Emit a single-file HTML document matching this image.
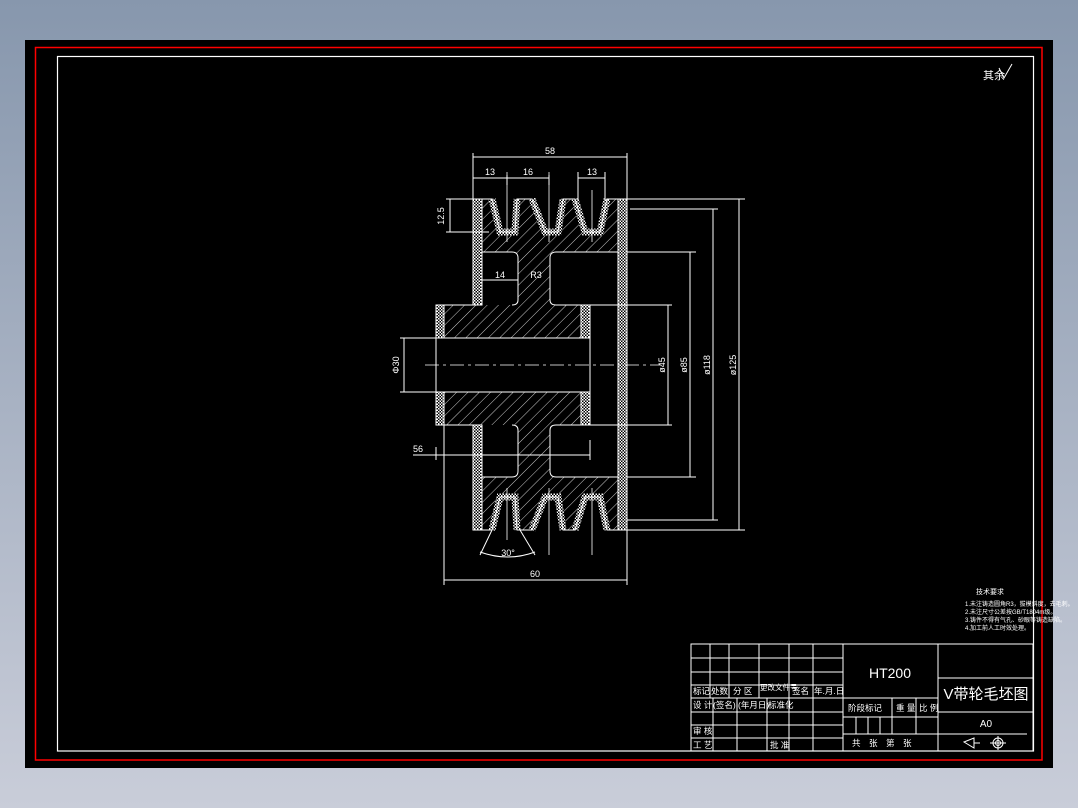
<!DOCTYPE html>
<html><head><meta charset="utf-8"><style>
html,body{margin:0;padding:0;width:1078px;height:808px;overflow:hidden;background:linear-gradient(#8797ad,#c9cdd9);}
svg{position:absolute;left:0;top:0}
text{font-family:"Liberation Sans","Noto Sans CJK SC",sans-serif;fill:#fff}
</style></head><body>
<svg width="1078" height="808" viewBox="0 0 1078 808">
<defs>
<pattern id="h" width="8" height="8" patternUnits="userSpaceOnUse" patternTransform="rotate(45)">
<line x1="0" y1="0" x2="0" y2="8" stroke="#fff" stroke-width="0.8"/></pattern>
<pattern id="c" width="3" height="3" patternUnits="userSpaceOnUse">
<rect width="3" height="3" fill="#000"/><rect width="1.5" height="1.5" fill="#fff"/><rect x="1.5" y="1.5" width="1.5" height="1.5" fill="#fff"/></pattern>
</defs>
<rect x="25" y="40" width="1028" height="728" fill="#000"/>
<rect x="35.5" y="47.5" width="1006.5" height="712.5" fill="none" stroke="#f00" stroke-width="1.5"/>
<rect x="57.5" y="56.5" width="976" height="694.5" fill="none" stroke="#fff" stroke-width="1.2"/>
<text x="983" y="79" font-size="11">其余</text>
<path d="M999 68 l5 10 l8 -14" fill="none" stroke="#fff"/>
<g stroke="#fff" stroke-width="1" fill="none">
<path d="M473 199 L492 199 L500 232 L515 232 L517 199 L532 199 L545 232 L558 232 L563 199 L575 199 L585 232 L600 232 L607 199 L627 199 L627 252 L556 252 Q550 252 550 258 L550 300 Q550 305 556 305 L590 305 L590 338 L436 338 L436 305 L512 305 Q518 305 518 300 L518 258 Q518 252 512 252 L473 252 Z" fill="url(#h)" stroke="none"/>
<path d="M436 392 L590 392 L590 425 L556 425 Q550 425 550 430 L550 471 Q550 477 556 477 L627 477 L627 530 L607 530 L600 497 L585 497 L575 530 L563 530 L558 497 L545 497 L532 530 L517 530 L515 497 L500 497 L492 530 L473 530 L473 477 L512 477 Q518 477 518 471 L518 430 Q518 425 512 425 L436 425 Z" fill="url(#h)" stroke="none"/>
<rect x="473" y="199" width="9" height="106" fill="url(#c)" stroke="#fff"/>
<rect x="473" y="425" width="9" height="105" fill="url(#c)" stroke="#fff"/>
<rect x="618" y="199" width="9" height="331" fill="url(#c)" stroke="#fff"/>
<rect x="436" y="305" width="8" height="33" fill="url(#c)" stroke="#fff"/>
<rect x="436" y="392" width="8" height="33" fill="url(#c)" stroke="#fff"/>
<rect x="581" y="305" width="9" height="33" fill="url(#c)" stroke="#fff"/>
<rect x="581" y="392" width="9" height="33" fill="url(#c)" stroke="#fff"/>
<path d="M492 199 L500 232 L515 232 L517 199 M532 199 L545 232 L558 232 L563 199 M575 199 L585 232 L600 232 L607 199" stroke="url(#c)" stroke-width="7"/>
<path d="M492 530 L500 497 L515 497 L517 530 M532 530 L545 497 L558 497 L563 530 M575 530 L585 497 L600 497 L607 530" stroke="url(#c)" stroke-width="7"/>
<path d="M473 199 L492 199 L500 232 L515 232 L517 199 L532 199 L545 232 L558 232 L563 199 L575 199 L585 232 L600 232 L607 199 L627 199 L627 530 L607 530 L600 497 L585 497 L575 530 L563 530 L558 497 L545 497 L532 530 L517 530 L515 497 L500 497 L492 530 L473 530 L473 425 L436 425 L436 305 L473 305 Z"/>
<path d="M482 252 L512 252 Q518 252 518 258 L518 300 Q518 305 512 305 M482 477 L512 477 Q518 477 518 471 L518 430 Q518 425 512 425"/>
<path d="M618 252 L556 252 Q550 252 550 258 L550 300 Q550 305 556 305 L590 305 M618 477 L556 477 Q550 477 550 471 L550 430 Q550 425 556 425 L590 425"/>
<path d="M436 338 L590 338 M436 392 L590 392 M590 305 L590 425"/>
<path d="M425 365 L660 365" stroke-dasharray="14 4 3 4" stroke-width="0.8"/>
<path d="M507 172 L507 242 M549 172 L549 242 M592 190 L592 242 M507 488 L507 540 M549 488 L549 555 M592 488 L592 555" stroke-width="0.8"/>
<path d="M473 153 L473 199 M627 153 L627 530 M473 157 L627 157"/>
<path d="M473 178 L549 178 M507 175 L507 185 M549 175 L549 185 M578 178 L605 178 M578 172 L578 200 M605 172 L605 200"/>
<path d="M446 199 L473 199 M446 232 L489 232 M450 199 L450 232"/>
<path d="M627 199 L745 199 M630 209 L718 209 M627 520 L718 520 M627 530 L745 530 M739 199 L739 530 M713 209 L713 520"/>
<path d="M627 252 L696 252 M627 477 L696 477 M690 252 L690 477 M590 305 L672 305 M590 425 L672 425 M668 305 L668 425"/>
<path d="M400 338 L436 338 M400 392 L436 392 M404 338 L404 392"/>
<path d="M444 425 L444 585 M444 580 L627 580 M627 530 L627 585"/>
<path d="M413 455 L590 455 M436 447 L436 460 M590 440 L590 460"/>
<path d="M482 280 L518 280"/>
<path d="M492 530 L480 555 M520 530 L535 555 M480 552 Q508 562 535 552"/>
</g>
<g font-size="9" text-anchor="middle">
<text x="550" y="154">58</text>
<text x="490" y="175">13</text>
<text x="528" y="175">16</text>
<text x="592" y="175">13</text>
<text x="500" y="278">14</text>
<text x="536" y="278">R3</text>
<text x="418" y="452">56</text>
<text x="535" y="577">60</text>
<text x="508" y="556">30°</text>
<text transform="translate(444 216) rotate(-90)">12.5</text>
<text transform="translate(399 365) rotate(-90)">Φ30</text>
<text transform="translate(665 365) rotate(-90)">ø45</text>
<text transform="translate(687 365) rotate(-90)">ø85</text>
<text transform="translate(710 365) rotate(-90)">ø118</text>
<text transform="translate(736 365) rotate(-90)">ø125</text>
</g>
<g font-size="6">
<text x="990" y="594" font-size="7" text-anchor="middle">技术要求</text>
<text x="965" y="606">1.未注铸造圆角R3，拔模斜度，去毛刺。</text>
<text x="965" y="614">2.未注尺寸公差按GB/T1804m级。</text>
<text x="965" y="622">3.铸件不得有气孔、砂眼等铸造缺陷。</text>
<text x="965" y="630">4.加工前人工时效处理。</text>
</g>
<g stroke="#fff" stroke-width="1" fill="none">
<rect x="691" y="644" width="342" height="107"/>
<path d="M843 644 L843 751 M938 644 L938 751"/>
<path d="M691 658 L843 658 M691 672 L843 672 M691 685 L843 685 M691 698 L843 698 M691 712 L843 712 M691 725 L843 725 M691 738 L843 738"/>
<path d="M710 644 L710 698 M729 644 L729 698 M759 644 L759 698 M789 644 L789 698 M813 644 L813 698"/>
<path d="M713 698 L713 751 M737 698 L737 751 M767 698 L767 751 M789 698 L789 751 M813 698 L813 751"/>
<path d="M843 698 L938 698 M843 717 L938 717 M843 734 L938 734"/>
<path d="M892 698 L892 734 M916 698 L916 734 M856 717 L856 734 M868 717 L868 734 M880 717 L880 734"/>
<path d="M938 678 L1033 678 M938 712 L1033 712 M938 734 L1027 734"/>
<path d="M964 742 L974 738 L974 748 Z M974 743 L980 743"/>
<circle cx="998" cy="743" r="5"/><circle cx="998" cy="743" r="2.5"/><path d="M990 743 L1006 743 M998 736 L998 750"/>
</g>
<g font-size="8.5">
<text x="693" y="694">标记</text><text x="711" y="694">处数</text><text x="733" y="694">分 区</text><text x="760" y="690" font-size="7.5">更改文件号</text><text x="792" y="694">签名</text><text x="814" y="694">年.月.日</text>
<text x="693" y="708">设 计</text><text x="713" y="708">(签名)</text><text x="738" y="708">(年月日)</text><text x="768" y="708">标准化</text>
<text x="693" y="734">审 核</text><text x="693" y="748">工 艺</text><text x="770" y="748">批 准</text>
<text x="848" y="711">阶段标记</text><text x="896" y="711">重 量</text><text x="919" y="711">比 例</text>
<text x="852" y="746">共　张　第　张</text>
</g>
<text x="890" y="678" font-size="14" text-anchor="middle">HT200</text>
<text x="986" y="699" font-size="15" text-anchor="middle">V带轮毛坯图</text>
<text x="986" y="727" font-size="10" text-anchor="middle">A0</text>
</svg>
</body></html>
